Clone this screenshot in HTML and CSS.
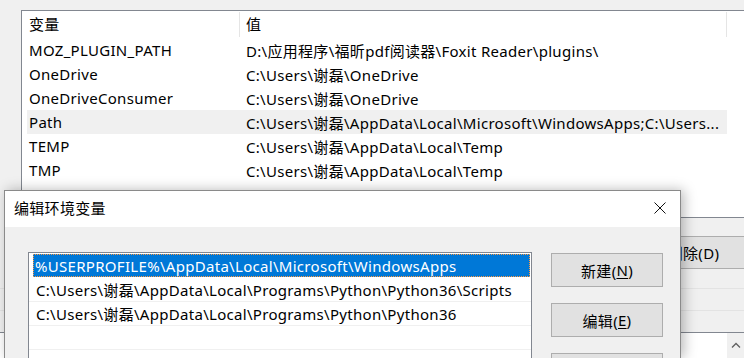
FILE: index.html
```html
<!DOCTYPE html>
<html lang="zh-CN">
<head>
<meta charset="utf-8">
<title>编辑环境变量</title>
<link rel="stylesheet" href="styles.css">
</head>
<body>
<div class="bgwin">
  <div class="vlist">
    <div class="vhead">
      <div class="h1">变量</div>
      <div class="h2">值</div>
    </div>
    <div class="vrow"><div class="c1">MOZ_PLUGIN_PATH</div><div class="c2">D:\应用程序\福昕pdf阅读器\Foxit Reader\plugins\</div></div>
    <div class="vrow"><div class="c1">OneDrive</div><div class="c2">C:\Users\谢磊\OneDrive</div></div>
    <div class="vrow"><div class="c1">OneDriveConsumer</div><div class="c2">C:\Users\谢磊\OneDrive</div></div>
    <div class="vrow hl"><div class="c1">Path</div><div class="c2">C:\Users\谢磊\AppData\Local\Microsoft\WindowsApps;C:\Users...</div></div>
    <div class="vrow"><div class="c1">TEMP</div><div class="c2">C:\Users\谢磊\AppData\Local\Temp</div></div>
    <div class="vrow"><div class="c1">TMP</div><div class="c2">C:\Users\谢磊\AppData\Local\Temp</div></div>
  </div>
  <div class="bgbtnrow">
    <div class="bgbtn">删除(D)</div>
  </div>
  <div class="stripe s1"></div>
  <div class="stripe s2"></div>
  <div class="stripe s3"></div>
  <div class="vlist2">
    <div class="scroll">
      <svg class="chev" width="10" height="6" viewBox="0 0 10 6"><path d="M1 5.5 L5 1.5 L9 5.5" fill="none" stroke="#606060" stroke-width="1.3"/></svg>
    </div>
  </div>
</div>

<div class="dialog">
  <div class="titlebar">
    <span class="title">编辑环境变量</span>
    <svg class="close" width="12" height="12" viewBox="0 0 12 12"><path d="M0.5 0.5 L11.5 11.5 M11.5 0.5 L0.5 11.5" stroke="#111" stroke-width="1"/></svg>
  </div>
  <div class="dbody">
    <div class="plist">
      <div class="prow selected"><span class="sel">%USERPROFILE%\AppData\Local\Microsoft\WindowsApps</span></div>
      <div class="prow"><span class="txt">C:\Users\谢磊\AppData\Local\Programs\Python\Python36\Scripts</span></div>
      <div class="prow"><span class="txt">C:\Users\谢磊\AppData\Local\Programs\Python\Python36</span></div>
      <div class="prow"></div>
    </div>
    <div class="btns">
      <div class="btn">新建(<u>N</u>)</div>
      <div class="btn">编辑(<u>E</u>)</div>
      <div class="btn last"></div>
    </div>
  </div>
</div>
</body>
</html>
```

FILE: styles.css
```css
* { box-sizing: border-box; }
html, body {
  margin: 0;
  padding: 0;
}
body {
  width: 744px;
  height: 358px;
  overflow: hidden;
  position: relative;
  background: #f0f0f0;
  font-family: "Noto Sans", "Noto Sans CJK SC", sans-serif;
  font-size: 15px;
  letter-spacing: 0.3px;
  color: #000;
}

/* background window */
.bgwin {
  padding: 10px 0 0 21px;
  height: 358px;
  overflow: hidden;
}
.vlist {
  width: 723px;
  height: 208px;
  background: #fff;
  border: 1px solid #828790;
  border-right: none;
  overflow: hidden;
}
.vhead {
  display: flex;
  height: 27px;
}
.h1, .h2 {
  height: 25px;
  margin: 1px 0;
  line-height: 25px;
  border-right: 1px solid #e5e5e5;
}
.h1 { width: 218px; padding-left: 7px; }
.h2 { width: 487px; padding-left: 6px; }
.vrow {
  display: flex;
  align-items: center;
  height: 24px;
  margin-left: 5px;
  width: 700px;
  white-space: nowrap;
}
.vrow.hl { background: #f0f0f0; }
.c1 { width: 219px; padding-left: 2px; }
.c2 { flex: 1; overflow: hidden; }

.bgbtnrow {
  margin-top: 18px;
  height: 33px;
  display: flex;
  padding-left: 615px;
}
.bgbtn {
  width: 108px;
  height: 33px;
  background: #e1e1e1;
  border: 1px solid #adadad;
  border-right: none;
  display: flex;
  align-items: center;
  justify-content: center;
  padding-left: 6px;
  white-space: nowrap;
}
.stripe {
  margin-left: -21px;
  border-bottom: 1px solid #e3e3e3;
}
.s1 { height: 20px; }
.s2 { height: 22px; }
.s3 { height: 22px; border-bottom-color: #828790; }
.vlist2 {
  height: 25px;
  background: #fff;
  display: flex;
  justify-content: flex-end;
  margin-left: -21px;
}
.scroll {
  width: 17px;
  height: 25px;
  background: #f0f0f0;
  display: flex;
  justify-content: center;
  padding-top: 9px;
}
.chev { display: block; }

/* dialog */
.dialog {
  position: absolute;
  left: 4px;
  top: 190px;
  width: 677px;
  height: 168px;
  background: #f0f0f0;
  border: 1px solid #8a8a8a;
  border-bottom: none;
  box-shadow: 3px 0 12px rgba(0, 0, 0, 0.28);
  overflow: hidden;
}
.titlebar {
  height: 36px;
  background: #fff;
  display: flex;
  align-items: center;
  justify-content: space-between;
  padding: 0 14px 2px 9px;
}
.title { line-height: 20px; }
.close { display: block; }
.dbody {
  display: flex;
  align-items: flex-start;
  padding: 25px 0 0 23px;
  gap: 19px;
}
.plist {
  width: 504px;
  height: 106px;
  background: #fff;
  border: 1px solid #828790;
  border-bottom: none;
  padding: 1px 0 0 0;
  overflow: hidden;
}
.prow {
  height: 24px;
  border-bottom: 1px solid #f0f0f0;
  display: flex;
  align-items: center;
  white-space: nowrap;
}
.prow .txt { padding-left: 7px; }
.prow.selected { border-bottom: none; height: 24px; }
.sel {
  display: flex;
  align-items: center;
  margin-left: 4px;
  width: 497px;
  height: 23px;
  align-self: flex-start;
  background: #0078d7;
  color: #fff;
  padding-left: 2px;
  outline: 1px dotted #ff9a40;
  outline-offset: -1px;
}
.btns {
  margin-top: 1px;
  display: flex;
  flex-direction: column;
  gap: 16px;
}
.btn {
  width: 112px;
  height: 34px;
  background: #e1e1e1;
  border: 1px solid #adadad;
  display: flex;
  align-items: center;
  justify-content: center;
  white-space: nowrap;
}
.btn.last {
  height: 5px;
  border-bottom: none;
}
.btn u { text-underline-offset: 2px; }
```
